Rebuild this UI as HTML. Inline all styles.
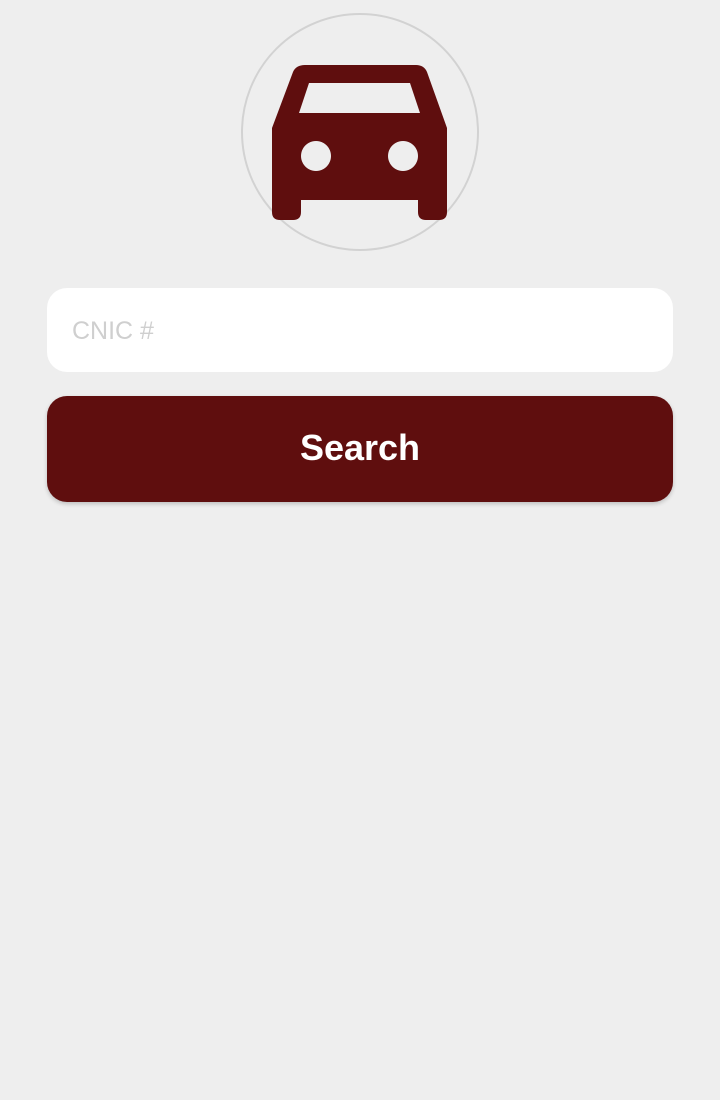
<!DOCTYPE html>
<html><head><style>
html,body{margin:0;padding:0;background:#eeeeee;width:720px;height:1100px;overflow:hidden;font-family:"Liberation Sans",sans-serif}
.circle{position:absolute;left:241px;top:13px;width:234px;height:234px;border:2px solid #d2d2d2;border-radius:50%;box-sizing:content-box}
svg{position:absolute;left:0;top:0}
.input{position:absolute;left:47px;top:288px;width:626px;height:84px;background:#fff;border-radius:20px}
.input span{position:absolute;left:25px;top:29px;font-size:25px;color:#cfcfcf;font-weight:300}
.btn{position:absolute;left:47px;top:396px;width:626px;height:106px;background:#5f0e0e;border-radius:20px;color:#fff;font-weight:bold;font-size:36px;text-align:center;line-height:104px;box-shadow:0 2px 4px rgba(0,0,0,0.2)}
</style></head><body>
<div class="circle"></div>
<svg width="720" height="260">
<path fill="#5f0e0e" fill-rule="evenodd" d="M305 65 H416 Q424 65 427 72 L447 128 V200 H447 V212 Q447 220 439 220 H426 Q418 220 418 212 V200 H301 V212 Q301 220 293 220 H280 Q272 220 272 212 V128 L293 72 Q296 65 305 65 Z M309 83 L299 113 H420 L410 83 Z M316 141 A15 15 0 1 0 316.01 141 Z M403 141 A15 15 0 1 0 403.01 141 Z"/>
</svg>
<div class="input"><span>CNIC #</span></div>
<div class="btn">Search</div>
</body></html>
